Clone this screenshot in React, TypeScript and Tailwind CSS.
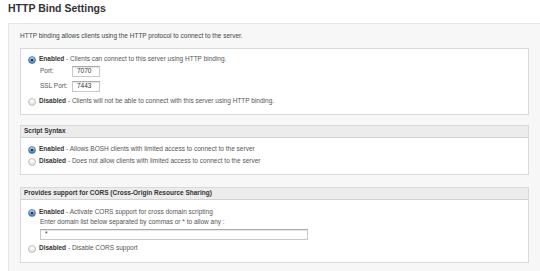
import React from 'react';

function Radio({ checked }: { checked?: boolean }) {
    return (
        <svg width="8" height="8" viewBox="0 0 8 8" className="shrink-0">
            <defs>
                <radialGradient id="rb-on" cx="50%" cy="35%" r="65%">
                    <stop offset="0%" stopColor="#d4e8fb" />
                    <stop offset="55%" stopColor="#6fa6dc" />
                    <stop offset="100%" stopColor="#2e68a8" />
                </radialGradient>
                <radialGradient id="rb-off" cx="50%" cy="35%" r="65%">
                    <stop offset="0%" stopColor="#ffffff" />
                    <stop offset="100%" stopColor="#dcdcdc" />
                </radialGradient>
            </defs>
            {checked ? (
                <>
                    <circle cx="4" cy="4" r="3.5" fill="url(#rb-on)" stroke="#3f6f9f" strokeWidth="0.6" />
                    <circle cx="4" cy="4" r="1.3" fill="#1c2f45" />
                </>
            ) : (
                <circle cx="4" cy="4" r="3.5" fill="url(#rb-off)" stroke="#a8a8a8" strokeWidth="0.6" />
            )}
        </svg>
    );
}

function Option({ checked, label, text }: { checked?: boolean; label: string; text: string }) {
    return (
        <div className="flex h-[9px] items-center gap-[3px]">
            <Radio checked={checked} />
            <span className="whitespace-nowrap leading-none">
                <b className="font-bold text-[#333]">{label}</b>
                <span className="text-[#555]"> - {text}</span>
            </span>
        </div>
    );
}

function Field({ value, width }: { value: string; width: string }) {
    return (
        <div
            className={`flex h-[11px] ${width} items-center border border-[#c8c8c8] border-t-[#aaa] bg-white pl-[4px] text-[6.5px] leading-none text-[#333] shadow-[inset_0_1px_1px_rgba(0,0,0,0.1)]`}
        >
            {value}
        </div>
    );
}

function Header({ title }: { title: string }) {
    return (
        <div className="flex h-[12px] items-center border-b border-[#d2d2d2] bg-[#ececec] pl-[3px] font-bold leading-none text-[#333]">
            {title}
        </div>
    );
}

export default function App() {
    return (
        <div
            className="h-[271px] w-[540px] overflow-hidden bg-white text-[6.5px]"
            style={{ fontFamily: '"Liberation Sans", Arial, sans-serif' }}
        >
            <h1 className="flex h-[23px] items-start pl-2 pt-[3px] text-[10.5px] font-bold leading-none text-[#333]">
                HTTP Bind Settings
            </h1>
            <div className="ml-2 h-full border-l border-t border-[#e6e6e6] bg-[#f7f7f7] pl-[11px] pr-[11px] pt-[9px]">
                <p className="h-[8px] leading-none text-[#444]">
                    HTTP binding allows clients using the HTTP protocol to connect to the server.
                </p>

                {/* http binding */}
                <div className="mt-[7px] border border-[#d9d9d9] bg-white pb-[8px] pl-[7px] pt-[6px]">
                    <Option checked label="Enabled" text="Clients can connect to this server using HTTP binding." />
                    <div className="mt-[2px] flex items-center pl-[12px] text-[#555]">
                        <span className="w-[32px] leading-none">Port:</span>
                        <Field value="7070" width="w-[28px]" />
                    </div>
                    <div className="mt-[4px] flex items-center pl-[12px] text-[#555]">
                        <span className="w-[32px] leading-none">SSL Port:</span>
                        <Field value="7443" width="w-[28px]" />
                    </div>
                    <div className="mt-[5px]">
                        <Option label="Disabled" text="Clients will not be able to connect with this server using HTTP binding." />
                    </div>
                </div>

                {/* script syntax */}
                <div className="mt-[10px] border border-[#d9d9d9] bg-white">
                    <Header title="Script Syntax" />
                    <div className="flex flex-col gap-[3px] pb-[8px] pl-[7px] pt-[7px]">
                        <Option checked label="Enabled" text="Allows BOSH clients with limited access to connect to the server" />
                        <Option label="Disabled" text="Does not allow clients with limited access to connect to the server" />
                    </div>
                </div>

                {/* cors */}
                <div className="mt-[12px] border border-[#d9d9d9] bg-white">
                    <Header title="Provides support for CORS (Cross-Origin Resource Sharing)" />
                    <div className="pb-[9px] pl-[7px] pt-[8px]">
                        <Option checked label="Enabled" text="Activate CORS support for cross domain scripting" />
                        <p className="mt-[1px] pl-[12px] leading-[8px] text-[#555]">
                            Enter domain list below separated by commas or * to allow any :
                        </p>
                        <div className="mt-[3px] pl-[12px]">
                            <Field value="*" width="w-[268px]" />
                        </div>
                        <div className="mt-[4px]">
                            <Option label="Disabled" text="Disable CORS support" />
                        </div>
                    </div>
                </div>
            </div>
        </div>
    );
}
